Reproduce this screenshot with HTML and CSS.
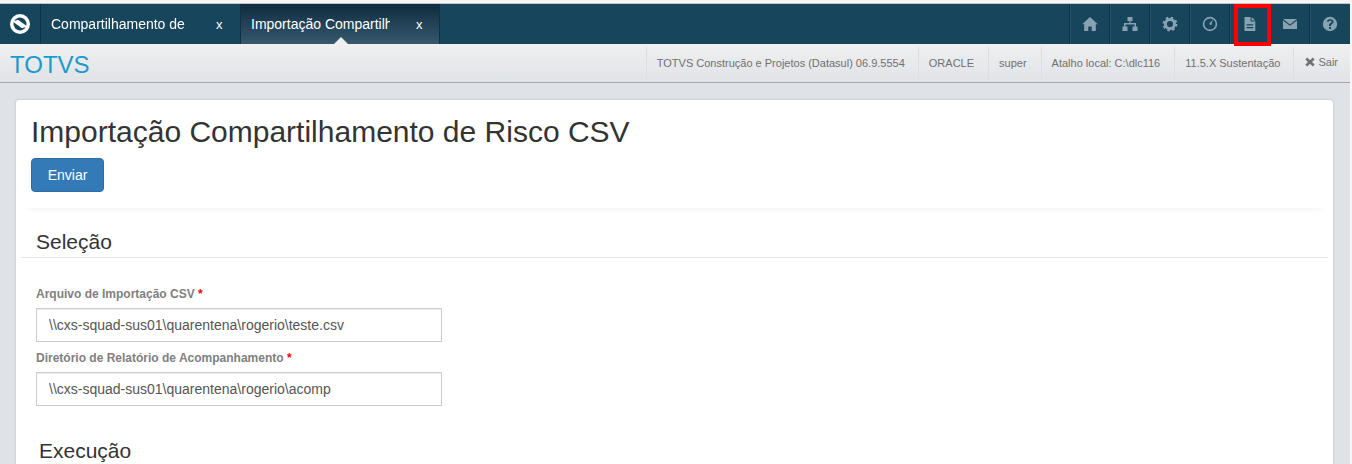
FILE: index.html
```html
<!DOCTYPE html>
<html lang="pt">
<head>
<meta charset="utf-8">
<title>Importação Compartilhamento de Risco CSV</title>
<link rel="stylesheet" href="styles.css">
</head>
<body>
<div class="page">
  <div class="window-edge"></div>
  <nav class="topbar">
    <div class="logo">
      <svg width="20" height="20" viewBox="0 0 20 20"><circle cx="10" cy="10" r="10" fill="#fff"/><circle cx="10" cy="10" r="6.5" fill="#17455c"/><path d="M2.6 7.6 L8 5.8 L17.4 12.4 L12 14.2 Z" fill="#fff"/></svg>
    </div>
    <div class="tab"><span class="tab-label tab-label-fade">Compartilhamento de Risco</span><span class="tab-close">x</span></div>
    <div class="tab tab-active"><span class="tab-label">Importação Compartilhamento</span><span class="tab-close">x</span></div>
    <div class="icons">
      <div class="icon-cell"><svg width="16" height="16" viewBox="0 0 16 16"><path d="M8 1 L15.8 8.2 L13.8 8.2 L13.8 15 L9.7 15 L9.7 10.5 L6.3 10.5 L6.3 15 L2.2 15 L2.2 8.2 L0.2 8.2 Z"/></svg></div>
      <div class="icon-cell"><svg width="16" height="16" viewBox="0 0 16 16"><path d="M5.5 1 H10.5 V5 H8.6 V7 H14 V10.5 H15.5 V15 H10.5 V10.5 H12.6 V8.4 H3.4 V10.5 H5.5 V15 H0.5 V10.5 H2 V7 H7.4 V5 H5.5 Z"/></svg></div>
      <div class="icon-cell"><svg width="16" height="16" viewBox="0 0 16 16"><circle class="line gear-ring" cx="8" cy="8" r="4.6"/><circle class="line gear-teeth" cx="8" cy="8" r="6.2"/></svg></div>
      <div class="icon-cell"><svg width="16" height="16" viewBox="0 0 16 16"><circle class="line" cx="8" cy="8" r="6.4"/><path d="M11 3.6 L9.2 9.2 L7 8 Z"/></svg></div>
      <div class="icon-cell"><svg width="16" height="16" viewBox="0 0 16 16"><path fill-rule="evenodd" d="M2.5 1 H8.6 V5.6 H13.3 V15 H2.5 Z M4.6 8.2 V9.5 H11.2 V8.2 Z M4.6 11 V12.3 H11.2 V11 Z"/><path d="M9.6 1 L13.3 4.6 H9.6 Z"/></svg></div>
      <div class="icon-cell"><svg width="16" height="16" viewBox="0 0 16 16"><path d="M1 3 H15 L8 8.4 Z"/><path d="M1 4.4 L8 9.8 L15 4.4 V13 H1 Z"/></svg></div>
      <div class="icon-cell"><svg width="16" height="16" viewBox="0 0 16 16"><path fill-rule="evenodd" d="M8 0.8 A7.2 7.2 0 1 0 8 15.2 A7.2 7.2 0 1 0 8 0.8 Z M7 10 V9 C7 7 9.6 7 9.6 5.7 C9.6 4.3 6.9 4.4 6.3 5.9 L4.7 5 C5.9 2.4 11.6 2.4 11.6 5.8 C11.6 8 9 7.8 9 10 Z M7 11 H9 V13 H7 Z"/></svg></div>
    </div>
    <div class="highlight"></div>
  </nav>

  <header class="subbar">
    <div class="brand">TOTVS</div>
    <ul class="info">
      <li class="info-tight">TOTVS Construção e Projetos (Datasul) 06.9.5554</li>
      <li>ORACLE</li>
      <li>super</li>
      <li>Atalho local: C:\dlc116</li>
      <li class="info-tight">11.5.X Sustentação</li>
      <li class="logout"><svg class="logout-icon" width="10" height="10" viewBox="0 0 10 10"><path d="M2.2 0.6 L5 3.2 L7.8 0.6 L9.6 2.4 L7 5 L9.6 7.6 L7.8 9.4 L5 6.8 L2.2 9.4 L0.4 7.6 L3 5 L0.4 2.4 Z"/></svg>Sair</li>
    </ul>
  </header>

  <main class="content">
    <section class="card">
      <div class="page-head">
        <h1>Importação Compartilhamento de Risco CSV</h1>
        <button class="btn" type="button">Enviar</button>
      </div>
      <h2 class="section-title">Seleção</h2>
      <form class="fields">
        <label class="label">Arquivo de Importação CSV <em>*</em></label>
        <input class="input" type="text" value="\\cxs-squad-sus01\quarentena\rogerio\teste.csv">
        <label class="label">Diretório de Relatório de Acompanhamento <em>*</em></label>
        <input class="input" type="text" value="\\cxs-squad-sus01\quarentena\rogerio\acomp">
      </form>
      <h2 class="section-title-plain">Execução</h2>
    </section>
  </main>
</div>
</body>
</html>
```
FILE: styles.css
```css
* { box-sizing: border-box; }
html, body { margin: 0; height: 100%; overflow: hidden; }
body { background: #f6f6f6; font-family: "Liberation Sans", Arial, sans-serif; color: #333; }
.page { width: 1350px; height: 464px; display: flex; flex-direction: column; background: #dfe3e7; }
.window-edge { height: 4px; flex: none; background: #f6f6f6; border-bottom: 1px solid #c4c4c4; }

.topbar { height: 40px; flex: none; display: flex; background: #17455c; position: relative; }
.logo { width: 41px; flex: none; display: flex; align-items: center; justify-content: center; border-right: 1px solid #0f3146; padding-right: 1px; }
.tab { width: 200px; flex: none; display: flex; align-items: center; padding-left: 10px; border-right: 1px solid #0f3146; color: #fff; font-size: 14px; position: relative; }
.tab-active { width: 199px; background: linear-gradient(#0f2c40, #37586d); }
.tab-active::after { content: ""; position: absolute; left: 93px; bottom: 0; border: 7px solid transparent; border-top: 0; border-bottom-color: #eeeff0; }
.tab-label { width: 139px; flex: none; overflow: hidden; white-space: nowrap; }
.tab-label-fade { -webkit-mask-image: linear-gradient(to right, #000 135px, transparent 139px); mask-image: linear-gradient(to right, #000 135px, transparent 139px); }
.tab-close { margin-left: 26px; font-size: 13px; }
.icons { margin-left: auto; margin-right: 1px; display: flex; }
.icon-cell { width: 40px; display: flex; align-items: center; justify-content: center; border-left: 1px solid #0f3146; box-shadow: inset 1px 0 0 #275369; }
.icon-cell svg { fill: #88a2b2; display: block; }
.icon-cell .line { fill: none; stroke: #88a2b2; stroke-width: 1.6; }
.icon-cell .gear-ring { stroke-width: 3; }
.icon-cell .gear-teeth { stroke-width: 2.4; stroke-dasharray: 2.4 2.47; }
.highlight { position: absolute; left: 1234px; top: 0; width: 37px; height: 42px; border: 4px solid #f00; }

.subbar { height: 39px; flex: none; display: flex; align-items: stretch; justify-content: space-between; background: linear-gradient(#f0f0f1, #e0e3e7); border-bottom: 1px solid #a3a5a7; }
.brand { padding: 8px 0 0 10px; font-size: 24px; line-height: 26px; color: #1a9ad0; }
.info { list-style: none; margin: 3px 0 0; padding: 0 0 3px; display: flex; font-size: 11px; color: #707070; }
.info li { display: flex; align-items: center; padding: 0 14px 0 10px; border-left: 1px solid #dcdee1; white-space: nowrap; height: 32px; }
.info .info-tight { padding-right: 13px; }
.info .logout { padding: 0 12px 2px 11px; }
.logout-icon { fill: #707070; margin-right: 3px; display: block; }

.content { flex: 1; min-height: 0; padding: 17px 17px 0 16px; }
.card { height: 100%; background: #fff; border-radius: 3px 3px 0 0; box-shadow: 0 0 2px rgba(0,0,0,.25); padding: 0 5px; }
.page-head { height: 108px; padding: 13px 10px 0; box-shadow: 0 6px 6px -6px rgba(0,0,0,.08); }
h1 { margin: 0; font-size: 30px; font-weight: 400; line-height: 38px; color: #333; }
.btn { display: block; margin-top: 7px; width: 73px; height: 34px; padding: 0; background: #337ab7; border: 1px solid #2e6da4; border-radius: 4px; color: #fff; font: 14px "Liberation Sans", Arial, sans-serif; }
.section-title { margin: 21px 0 0; padding: 0 15px; height: 29px; font-size: 21px; font-weight: 400; line-height: 26px; border-bottom: 1px solid #e5e5e5; }
.fields { padding: 28px 0 0 15px; }
.label { display: block; font-size: 12px; font-weight: 700; line-height: 17px; color: #808080; }
.label em { font-style: normal; color: #f00; }
.input { display: block; width: 406px; height: 34px; margin: 5px 0 8px; padding: 0 12px; border: 1px solid #ccc; background: #fff; font: 14px "Liberation Sans", Arial, sans-serif; color: #555; box-shadow: inset 0 1px 1px rgba(0,0,0,.075); outline: 0; }
.section-title-plain { margin: 32px 0 0 18px; font-size: 21px; font-weight: 400; line-height: 26px; }
```
